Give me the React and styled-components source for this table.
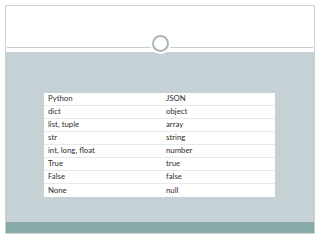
import React from 'react';
import styled, { createGlobalStyle } from 'styled-components';

const GlobalStyle = createGlobalStyle`
  html, body {
    margin: 0;
    padding: 0;
    background: #ffffff;
  }
  body {
    font-family: Lato, "Open Sans", sans-serif;
  }
`;

const Slide = styled.div`
  margin: 5px 0 0 5px;
  width: 308px;
  height: 227px;
  border: 1px solid #c9d2d6;
  display: flex;
  flex-direction: column;
  background: #ffffff;
`;

const Header = styled.div`
  position: relative;
  height: 42px;
  display: flex;
  flex-direction: column;
  justify-content: flex-end;
  padding: 0 1px 4px;
`;

const Rule = styled.div`
  height: 1px;
  background: #c3cdd1;
`;

const Knob = styled.div`
  position: absolute;
  left: 146px;
  top: 29px;
  width: 13px;
  height: 13px;
  border-radius: 50%;
  border: 2px solid #a9b7ba;
  background: #ffffff;
  box-shadow: 0 0 0 2px #ffffff;
`;

const Body = styled.div`
  flex: 1;
  background: #c6d1d6;
  padding: 41px 0 0 38px;
`;

const Footer = styled.div`
  height: 11px;
  background: #87aaa7;
`;

const Table = styled.div`
  width: 231px;
  background: #ffffff;
  display: flex;
  flex-direction: column;
`;

const Row = styled.div`
  display: grid;
  grid-template-columns: 118px 1fr;
  height: 13px;
  align-items: center;
  border-bottom: ${(p) => (p.last ? 'none' : '1px solid #e6eaec')};
  box-sizing: border-box;
`;

const Cell = styled.span`
  padding-left: 4px;
  font-size: 7.8px;
  color: #2e2e2e;
  line-height: 1;
`;

const rows = [
  ['Python', 'JSON'],
  ['dict', 'object'],
  ['list, tuple', 'array'],
  ['str', 'string'],
  ['int, long, float', 'number'],
  ['True', 'true'],
  ['False', 'false'],
  ['None', 'null'],
];

export default function App() {
  return (
    <>
      <GlobalStyle />
      <Slide>
        <Header>
          <Rule />
          <Knob />
        </Header>
        <Body>
          <Table>
            {rows.map(([py, js], i) => (
              <Row key={py} last={i === rows.length - 1}>
                <Cell>{py}</Cell>
                <Cell>{js}</Cell>
              </Row>
            ))}
          </Table>
        </Body>
        <Footer />
      </Slide>
    </>
  );
}
